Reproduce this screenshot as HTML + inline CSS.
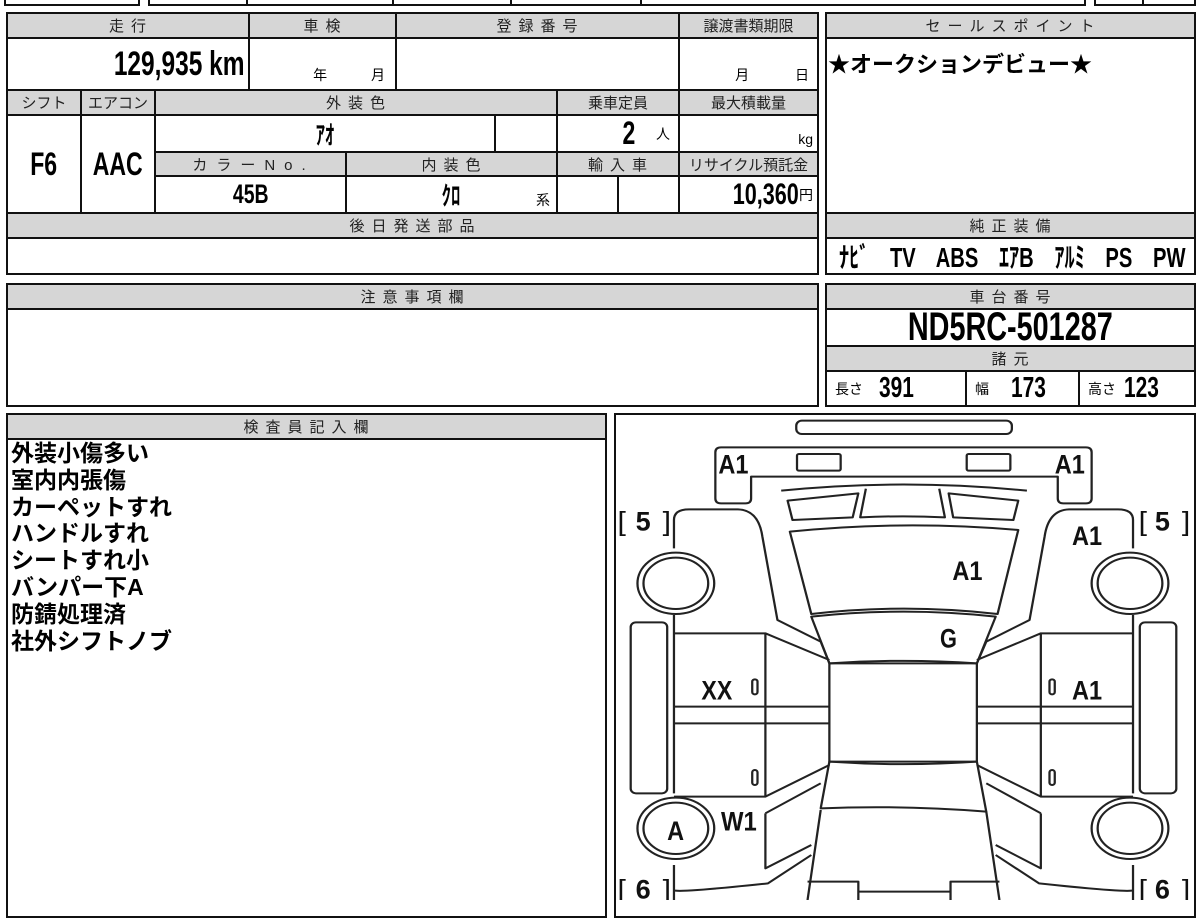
<!DOCTYPE html>
<html><head><meta charset="utf-8"><style>
body{margin:0;width:1200px;height:900px;overflow:hidden;background:#fff;position:relative;font-family:"Liberation Sans","Noto Sans CJK JP",sans-serif;color:#000}
.b{position:absolute;border:2px solid #111;box-sizing:border-box;display:flex;align-items:center;justify-content:center;white-space:nowrap}
.h{background:#d6d6d6;font-size:15px;letter-spacing:7px;color:#222;padding-left:6px}
.n{display:inline-block;font-weight:bold;transform:scaleX(.72);font-family:"Liberation Sans","Noto Sans CJK JP",sans-serif}
.r{transform-origin:right center}
.l{transform-origin:left center}
.s{font-size:14px}
.t{position:absolute;left:11px;font-size:23px;font-weight:bold;line-height:26.8px}
</style></head><body>
<div class="b" style="left:4px;top:-10px;width:136px;height:16px"></div>
<div class="b" style="left:148px;top:-10px;width:100px;height:16px"></div>
<div class="b" style="left:246px;top:-10px;width:148px;height:16px"></div>
<div class="b" style="left:392px;top:-10px;width:120px;height:16px"></div>
<div class="b" style="left:510px;top:-10px;width:132px;height:16px"></div>
<div class="b" style="left:640px;top:-10px;width:446px;height:16px"></div>
<div class="b" style="left:1094px;top:-10px;width:50px;height:16px"></div>
<div class="b" style="left:1142px;top:-10px;width:54px;height:16px"></div>

<div class="b h" style="left:6px;top:12px;width:244px;height:27px">走行</div>
<div class="b h" style="left:248px;top:12px;width:149px;height:27px">車検</div>
<div class="b h" style="left:395px;top:12px;width:285px;height:27px">登録番号</div>
<div class="b h" style="left:678px;top:12px;width:141px;height:27px;letter-spacing:0;padding:0">譲渡書類期限</div>
<div class="b" style="left:6px;top:37px;width:244px;height:54px;justify-content:flex-end;padding-right:4px"><span class="n r" style="font-size:34px">129,935 km</span></div>
<div class="b s" style="left:248px;top:37px;width:149px;height:54px;align-items:flex-end;justify-content:flex-end;padding:0 10px 4px 0;word-spacing:40px">年 月</div>
<div class="b" style="left:395px;top:37px;width:285px;height:54px"></div>
<div class="b s" style="left:678px;top:37px;width:141px;height:54px;align-items:flex-end;justify-content:flex-end;padding:0 8px 4px 0;word-spacing:42px">月 日</div>

<div class="b h" style="left:6px;top:89px;width:76px;height:27px;letter-spacing:0;padding:0">シフト</div>
<div class="b h" style="left:80px;top:89px;width:76px;height:27px;letter-spacing:0;padding:0">エアコン</div>
<div class="b h" style="left:154px;top:89px;width:404px;height:27px">外装色</div>
<div class="b h" style="left:556px;top:89px;width:124px;height:27px;letter-spacing:0;padding:0">乗車定員</div>
<div class="b h" style="left:678px;top:89px;width:141px;height:27px;letter-spacing:0;padding:0">最大積載量</div>
<div class="b" style="left:6px;top:114px;width:76px;height:100px"><span class="n" style="font-size:32px">F6</span></div>
<div class="b" style="left:80px;top:114px;width:76px;height:100px"><span class="n" style="font-size:32px">AAC</span></div>
<div class="b" style="left:154px;top:114px;width:342px;height:39px"><span class="n" style="font-size:26px">ｱｵ</span></div>
<div class="b" style="left:494px;top:114px;width:64px;height:39px"></div>
<div class="b" style="left:556px;top:114px;width:124px;height:39px;justify-content:flex-end;padding-right:8px"><span class="n" style="font-size:32px">2</span><span class="s" style="margin-left:18px">人</span></div>
<div class="b s" style="left:678px;top:114px;width:141px;height:39px;justify-content:flex-end;align-items:flex-end;padding:0 4px 4px 0">kg</div>
<div class="b h" style="left:154px;top:151px;width:193px;height:26px;letter-spacing:9px">カラーNo.</div>
<div class="b h" style="left:345px;top:151px;width:213px;height:26px">内装色</div>
<div class="b h" style="left:556px;top:151px;width:124px;height:26px">輸入車</div>
<div class="b h" style="left:678px;top:151px;width:141px;height:26px;letter-spacing:0;padding:0">リサイクル預託金</div>
<div class="b" style="left:154px;top:175px;width:193px;height:39px"><span class="n" style="font-size:27px">45B</span></div>
<div class="b" style="left:345px;top:175px;width:213px;height:39px"><span class="n" style="font-size:26px">ｸﾛ</span><span class="s" style="position:absolute;right:6px;bottom:2px">系</span></div>
<div class="b" style="left:556px;top:175px;width:63px;height:39px"></div>
<div class="b" style="left:617px;top:175px;width:63px;height:39px"></div>
<div class="b" style="left:678px;top:175px;width:141px;height:39px;justify-content:flex-end;padding-right:4px"><span class="n r" style="font-size:30px">10,360</span><span class="s">円</span></div>
<div class="b h" style="left:6px;top:212px;width:813px;height:27px">後日発送部品</div>
<div class="b" style="left:6px;top:237px;width:813px;height:38px"></div>

<div class="b h" style="left:825px;top:12px;width:371px;height:27px">セールスポイント</div>
<div class="b" style="left:825px;top:37px;width:371px;height:177px;align-items:flex-start;justify-content:flex-start;padding:8px 0 0 1px;font-size:22px;font-weight:bold">★オークションデビュー★</div>
<div class="b h" style="left:825px;top:212px;width:371px;height:27px">純正装備</div>
<div class="b" style="left:825px;top:237px;width:371px;height:38px;font-size:28px;justify-content:flex-start;padding-left:12px"><span class="n l" style="word-spacing:21px">ﾅﾋﾞ TV ABS ｴｱB ｱﾙﾐ PS PW</span></div>

<div class="b h" style="left:6px;top:283px;width:813px;height:27px">注意事項欄</div>
<div class="b" style="left:6px;top:308px;width:813px;height:99px"></div>

<div class="b h" style="left:825px;top:283px;width:371px;height:27px">車台番号</div>
<div class="b" style="left:825px;top:308px;width:371px;height:39px"><span class="n" style="font-size:40px">ND5RC-501287</span></div>
<div class="b h" style="left:825px;top:345px;width:371px;height:27px">諸元</div>
<div class="b" style="left:825px;top:370px;width:142px;height:37px;justify-content:flex-start;padding-left:8px"><span class="s">長さ</span><span class="n l" style="font-size:29px;margin-left:16px">391</span></div>
<div class="b" style="left:965px;top:370px;width:115px;height:37px;justify-content:flex-start;padding-left:8px"><span class="s">幅</span><span class="n l" style="font-size:29px;margin-left:22px">173</span></div>
<div class="b" style="left:1078px;top:370px;width:118px;height:37px;justify-content:flex-start;padding-left:8px"><span class="s">高さ</span><span class="n l" style="font-size:29px;margin-left:8px">123</span></div>

<div class="b h" style="left:6px;top:413px;width:601px;height:27px">検査員記入欄</div>
<div class="b" style="left:6px;top:438px;width:601px;height:480px"></div>
<div class="t" style="top:440px">外装小傷多い<br>室内内張傷<br>カーペットすれ<br>ハンドルすれ<br>シートすれ小<br>バンパー下A<br>防錆処理済<br>社外シフトノブ</div>

<div class="b" style="left:614px;top:413px;width:582px;height:505px"></div>
<svg style="position:absolute;left:610px;top:410px" width="590" height="490" viewBox="0 0 1568 1470" preserveAspectRatio="none">
<g fill="none" stroke="#222" stroke-width="6" stroke-linejoin="round">
<rect x="495" y="32" width="573" height="40" rx="15"/>
<path d="M295,112 H1265 Q1280,112 1280,127 V265 Q1280,280 1265,280 H1205 Q1190,280 1190,265 V200 H375 V265 Q375,280 360,280 H295 Q280,280 280,265 V127 Q280,112 295,112 Z"/>
<rect x="497" y="132" width="116" height="50" rx="5"/>
<rect x="948" y="132" width="116" height="50" rx="5"/>
<path d="M455,242 Q780,205 1108,242"/>
<path d="M472,272 L660,250 L645,322 L485,330 Z"/>
<path d="M900,250 L1085,272 L1072,330 L912,322 Z"/>
<path d="M680,236 L665,322 Q780,316 890,322 L875,236"/>
<path d="M478,365 Q780,330 1085,360 L1030,612 Q780,580 535,612 Z"/>
<path d="M535,620 Q780,590 1025,620 L975,760 Q780,745 583,760 Z"/>
<rect x="583" y="760" width="392" height="295"/>
<path d="M583,1055 Q780,1070 975,1055 L1000,1205 Q780,1185 560,1195 Z"/>
<path d="M560,1200 L525,1470 M1000,1205 L1035,1470"/>
<path d="M525,1415 H660 V1470 M1035,1415 H905 V1470 M660,1445 H905"/>
<path d="M170,415 V330 Q170,298 210,298 H340 Q395,300 405,380 L445,630 L560,695 L583,760"/>
<path d="M170,670 H413 L583,750 M170,890 H583 M170,940 H583 M170,1160 H413 L583,1065 M413,670 V1160 M170,615 V1150"/>
<path d="M413,1210 L560,1120 M413,1210 V1375 L535,1305 M535,1335 L420,1420 Q170,1450 170,1440 M170,1365 V1470"/>
<rect x="55" y="637" width="97" height="513" rx="14"/>
<path d="M1390,415 V330 Q1390,298 1350,298 H1220 Q1165,300 1155,380 L1115,630 L1000,695 L975,760"/>
<path d="M1390,670 H1145 L975,750 M1390,890 H975 M1390,940 H975 M1390,1160 H1145 L975,1065 M1145,670 V1160 M1390,615 V1150"/>
<path d="M1145,1210 L1000,1120 M1145,1210 V1375 L1025,1305 M1025,1335 L1140,1420 Q1390,1450 1390,1440 M1390,1365 V1470"/>
<rect x="1408" y="637" width="97" height="513" rx="14"/>
<ellipse cx="175" cy="520" rx="102" ry="92"/><ellipse cx="175" cy="520" rx="86" ry="77"/>
<ellipse cx="1382" cy="520" rx="102" ry="92"/><ellipse cx="1382" cy="520" rx="86" ry="77"/>
<ellipse cx="175" cy="1255" rx="102" ry="92"/><ellipse cx="175" cy="1255" rx="86" ry="77"/>
<ellipse cx="1382" cy="1255" rx="102" ry="92"/><ellipse cx="1382" cy="1255" rx="86" ry="77"/>
<rect x="378" y="808" width="14" height="45" rx="7"/><rect x="378" y="1080" width="14" height="45" rx="7"/>
<rect x="1168" y="808" width="14" height="45" rx="7"/><rect x="1168" y="1080" width="14" height="45" rx="7"/>
</g>
<g font-family="'Liberation Sans',sans-serif" font-weight="bold" font-size="80" fill="#111">
<text x="288" y="190" textLength="80" lengthAdjust="spacingAndGlyphs">A1</text>
<text x="1182" y="190" textLength="80" lengthAdjust="spacingAndGlyphs">A1</text>
<text x="1228" y="405" textLength="80" lengthAdjust="spacingAndGlyphs">A1</text>
<text x="910" y="510" textLength="80" lengthAdjust="spacingAndGlyphs">A1</text>
<text x="877" y="712" textLength="45" lengthAdjust="spacingAndGlyphs">G</text>
<text x="243" y="868" textLength="82" lengthAdjust="spacingAndGlyphs">XX</text>
<text x="1228" y="868" textLength="80" lengthAdjust="spacingAndGlyphs">A1</text>
<text x="152" y="1290" textLength="45" lengthAdjust="spacingAndGlyphs">A</text>
<text x="295" y="1262" textLength="95" lengthAdjust="spacingAndGlyphs">W1</text>
<text x="20" y="362" font-weight="normal">[</text><text x="68" y="362" textLength="40" lengthAdjust="spacingAndGlyphs">5</text><text x="140" y="362" font-weight="normal">]</text>
<text x="1405" y="362" font-weight="normal">[</text><text x="1448" y="362" textLength="40" lengthAdjust="spacingAndGlyphs">5</text><text x="1520" y="362" font-weight="normal">]</text>
<text x="20" y="1465" font-weight="normal">[</text><text x="68" y="1465" textLength="40" lengthAdjust="spacingAndGlyphs">6</text><text x="140" y="1465" font-weight="normal">]</text>
<text x="1405" y="1465" font-weight="normal">[</text><text x="1448" y="1465" textLength="40" lengthAdjust="spacingAndGlyphs">6</text><text x="1520" y="1465" font-weight="normal">]</text>
</g>
</svg>
</body></html>
